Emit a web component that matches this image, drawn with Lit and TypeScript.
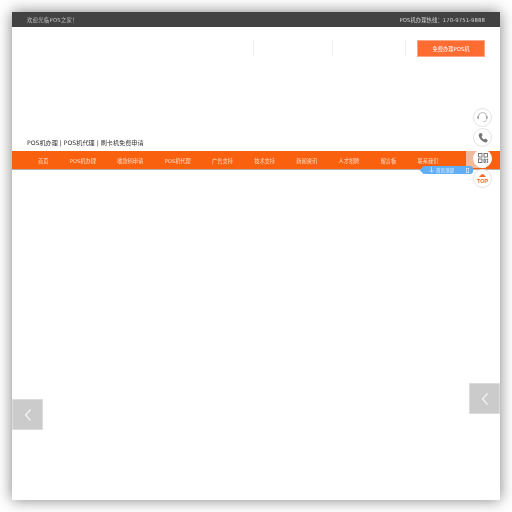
import { LitElement, html, css } from "lit";
import { customElement } from "lit/decorators.js";

const NAV = ["首页", "POS机办理", "收款码申请", "POS机代理", "广告支持", "技术支持", "新闻资讯", "人才招聘", "留言板", "联系我们"];

@customElement("app-root")
export class AppRoot extends LitElement {
  static styles = css`
    :host { display: block; width: 512px; height: 512px; padding: 12px; box-sizing: border-box; background: #fff; overflow: hidden;
      font-family: "DejaVu Sans", "Noto Sans CJK SC", sans-serif; }
    .page { position: relative; width: 488px; height: 488px; background: #fff; box-shadow: 0 0 14px rgba(0,0,0,.5); display: flex; flex-direction: column; }
    .soft { filter: blur(.25px); }
    .top { height: 15px; background: #424242; color: #c4c4c4; font-size: 5.3px; display: flex; align-items: center; justify-content: space-between; padding: 0 15px; flex: none; }
    .top .welcome { letter-spacing: .3px; }
    .top .tel { color: #d2d2d2; letter-spacing: .1px; }
    .head { height: 124px; flex: none; position: relative; display: flex; flex-direction: column; justify-content: flex-end; padding: 0 15px 3px; box-sizing: border-box; }
    .tools { position: absolute; top: 13px; right: 15px; display: flex; align-items: flex-start; }
    .sep { width: 1px; height: 16px; background: #f0f0f0; }
    .s0 { margin-right: 78px; }
    .s1 { margin-right: 72px; }
    .s2 { margin-right: 11px; }
    .cta { width: 68px; height: 17px; background: #ff6c32; border: 1px solid #ffa585; box-sizing: border-box; color: #fff; font-size: 5.3px; display: flex; align-items: center; justify-content: center; }
    .slogan { font-size: 6.15px; line-height: 10px; color: #333; }
    .nav { height: 19px; flex: none; background: #f9610f; border-bottom: 1px solid #b9b0ad; box-sizing: border-box; display: flex; align-items: center; padding-left: 15.4px; color: #ffe0cf; font-size: 5.2px; }
    .nav span { flex: none; padding: 0 10.7px; }
    .body { flex: 1; }
    .arrow { position: absolute; background: #cbcbcb; border: 1px solid #dcdcdc; box-sizing: border-box; width: 31px; height: 31px; display: flex; align-items: center; justify-content: center; }
    .a-l { left: 0; top: 387px; }
    .a-r { right: 0; top: 371px; }
    .float { position: absolute; top: 96px; right: 8px; width: 19px; display: flex; flex-direction: column; gap: 1.4px; align-items: center; }
    .circle { width: 19px; height: 19px; border-radius: 50%; background: #fff; border: 1px solid #e4e4e4; box-sizing: border-box; display: flex; flex-direction: column; align-items: center; justify-content: center; }
    .circle.qr { border-color: #fff; }
    .top-t { color: #f96a2a; font-family: "Liberation Sans", sans-serif; font-size: 5.5px; line-height: 6px; font-weight: bold; margin-top: 1px; }
    .patch { position: absolute; top: 139px; right: 14px; width: 20px; height: 17px; background: #f3b99d; }
    .pill { position: absolute; top: 154px; right: 27px; width: 50px; height: 8px; background: #62aef5; color: #e6f2ff; font-size: 4.5px; display: flex; align-items: center; justify-content: space-between; padding: 0 4px 0 6px; box-sizing: border-box; border-radius: 3px; }
    .pill::before { content: ""; position: absolute; left: -2.500px; top: 1.200px; width: 5.600px; height: 5.600px; background: #62aef5; transform: rotate(45deg); }
    .pill span { position: relative; display: flex; align-items: center; gap: 2px; }
  `;

  render() {
    return html`<div class="page">
      <div class="top"><span class="welcome soft">欢迎光临POS之家！</span><span class="tel soft">POS机办理热线：170-9751-9888</span></div>
      <div class="head">
        <div class="tools"><i class="sep s0"></i><i class="sep s1"></i><i class="sep s2"></i><div class="cta"><span class="soft">免费办理POS机</span></div></div>
        <div class="slogan soft">POS机办理 | POS机代理 | 刷卡机免费申请</div>
      </div>
      <div class="nav">${NAV.map((n) => html`<span class="soft">${n}</span>`)}</div>
      <div class="body"></div>
      <div class="arrow a-l"><svg width="10" height="14" viewBox="0 0 10 14"><path d="M7.500 1.500 2.500 7l5 5.500" fill="none" stroke="#f4f4f4" stroke-width="1.2"/></svg></div>
      <div class="arrow a-r"><svg width="10" height="14" viewBox="0 0 10 14"><path d="M7.500 1.500 2.500 7l5 5.500" fill="none" stroke="#f4f4f4" stroke-width="1.2"/></svg></div>
      <div class="patch"></div>
      <div class="float">
        <div class="circle"><svg width="13" height="13" viewBox="0 0 13 13" fill="none" stroke="#9a9a9a" stroke-width=".7"><path d="M2.500 6.500V5.500a4 4 0 0 1 8 0v1"/><path d="M1.500 6a1 1 0 0 1 1-1v3a1 1 0 0 1-1-1zM11.500 6a1 1 0 0 0-1-1v3a1 1 0 0 0 1-1z"/><path d="M10.500 8.500c0 1.600-1.400 2.200-3.200 2.200"/></svg></div>
        <div class="circle"><svg width="12" height="12" viewBox="0 0 12 12"><path d="M2.800 1.200 4.600 1l1 2.600-1.100 1c.4 1.200 1.300 2.300 2.600 3l1.200-1 2.300 1.300-.2 1.700c-.6.800-1.600 1-2.600.6C4.700 9.200 2.600 6.800 1.800 4c-.3-1.200.2-2.200 1-2.800z" fill="#757575"/></svg></div>
        <div class="circle qr"><svg width="12" height="12" viewBox="0 0 12 12" fill="none" stroke="#6a6a6a" stroke-width=".9"><rect x="1.500" y="1.500" width="3.500" height="3.500"/><rect x="7" y="1.500" width="3.500" height="3.500"/><rect x="1.500" y="7" width="3.500" height="3.500"/><path d="M7 7h1.300v3.500H7zM10 7h.7v1.300H10zM10 9.600h.7v.9H10z"/></svg></div>
        <div class="circle"><svg width="7" height="3" viewBox="0 0 7 3"><path d="M0 3 2.500.3h2L7 3z" fill="#f96a2a"/></svg><span class="top-t">TOP</span></div>
      </div>
      <div class="pill"><span class="soft"><svg width="5" height="6" viewBox="0 0 5 6" fill="none" stroke="#e6f2ff" stroke-width=".7"><path d="M2.500 0v5M.5 3.500C1 5 4 5 4.500 3.500"/></svg>首页顶部</span><span><svg width="3" height="5" viewBox="0 0 3 5" fill="none" stroke="#e6f2ff" stroke-width=".6"><rect x=".3" y=".3" width="2.400" height="4.400"/></svg></span></div>
    </div>`;
  }
}
